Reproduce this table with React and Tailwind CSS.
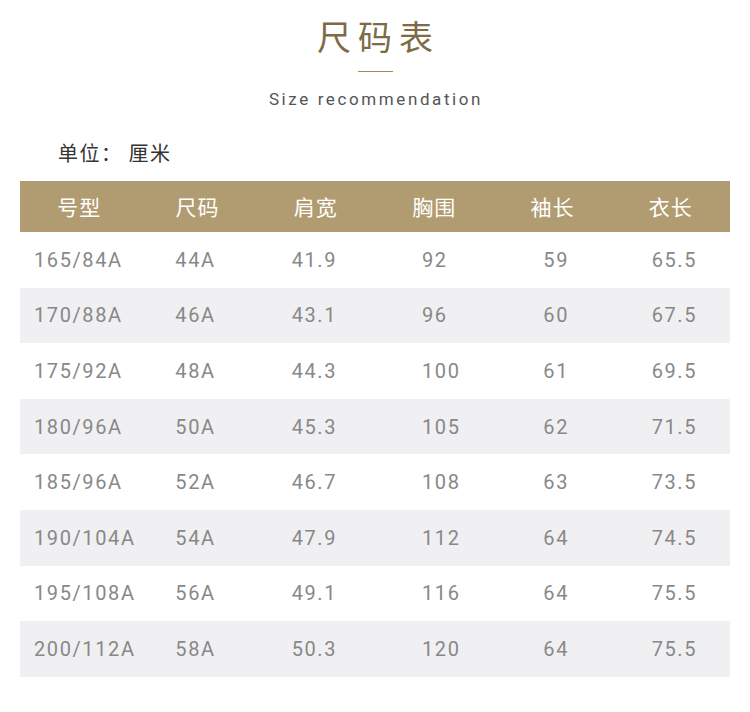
import React from "react";

const rows = [
  ["165/84A", "44A", "41.9", "92", "59", "65.5"],
  ["170/88A", "46A", "43.1", "96", "60", "67.5"],
  ["175/92A", "48A", "44.3", "100", "61", "69.5"],
  ["180/96A", "50A", "45.3", "105", "62", "71.5"],
  ["185/96A", "52A", "46.7", "108", "63", "73.5"],
  ["190/104A", "54A", "47.9", "112", "64", "74.5"],
  ["195/108A", "56A", "49.1", "116", "64", "75.5"],
  ["200/112A", "58A", "50.3", "120", "64", "75.5"],
];

const heads = ["号型", "尺码", "肩宽", "胸围", "袖长", "衣长"];

// left offset of the numbers inside each column
const pads = ["pl-[14px]", "pl-[37px]", "pl-[35px]", "pl-[47px]", "pl-[50px]", "pl-[40px]"];

function App() {
  return (
    <div className="w-[750px] h-[712px] bg-white font-['Noto_Sans_CJK_SC',sans-serif]">
      <div className="flex flex-col items-center pt-[13px]">
        <h1 className="text-[34px] leading-[46px] tracking-[7px] pl-[7px] text-[#7d6b45] font-normal">
          尺码表
        </h1>
        <div className="w-[35px] h-px bg-[#9e8c5f] mt-[12px]"></div>
        <p className="mt-[17px] pl-[2px] text-[17px] leading-[20px] tracking-[2.6px] text-[#555] font-['Roboto','Liberation_Sans',sans-serif]">
          Size recommendation
        </p>
      </div>

      <div className="pl-[58px] mt-[30px] text-[20px] leading-[28px] text-[#333] tracking-[1.5px]">
        单位： 厘米
      </div>

      <div className="mx-[20px] mt-[14px]">
        <div className="grid grid-cols-6 h-[51px] bg-[#b19b70] items-center">
          {heads.map((h) => (
            <div key={h} className="text-center text-white text-[21px] tracking-[1px]">
              {h}
            </div>
          ))}
        </div>
        {rows.map((r, i) => (
          <div
            key={r[0]}
            className={
              "grid grid-cols-6 h-[55.6px] items-center " +
              (i % 2 === 1 ? "bg-[#f0f0f2]" : "bg-white")
            }
          >
            {r.map((c, j) => (
              <div
                key={j}
                className={
                  pads[j] +
                  " text-[20px] tracking-[1.6px] text-[#888] font-normal font-['Roboto','Liberation_Sans',sans-serif]"
                }
              >
                {c}
              </div>
            ))}
          </div>
        ))}
      </div>
    </div>
  );
}

export default App;
